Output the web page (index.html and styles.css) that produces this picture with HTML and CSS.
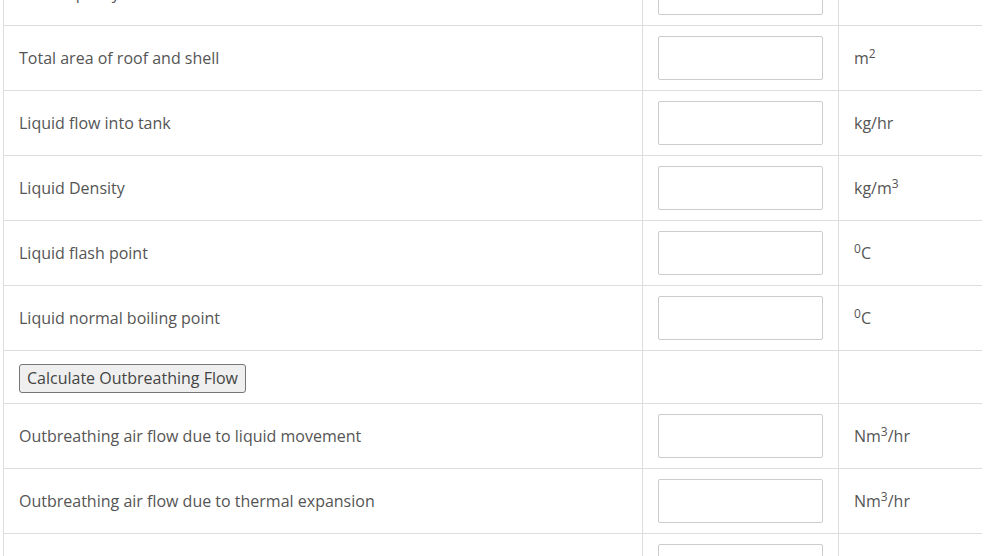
FILE: index.html
```html
<!DOCTYPE html>
<html lang="en">
<head>
    <meta charset="UTF-8">
    <title>Outbreathing Flow</title>
    <link rel="stylesheet" href="styles.css">
</head>
<body>
<div class="page">
    <table class="calc">
        <tr>
            <td class="label">Tank capacity</td>
            <td class="field"><input type="text" /></td>
            <td class="unit">m<sup>3</sup></td>
        </tr>
        <tr>
            <td class="label">Total area of roof and shell</td>
            <td class="field"><input type="text" /></td>
            <td class="unit">m<sup>2</sup></td>
        </tr>
        <tr>
            <td class="label">Liquid flow into tank</td>
            <td class="field"><input type="text" /></td>
            <td class="unit">kg/hr</td>
        </tr>
        <tr>
            <td class="label">Liquid Density</td>
            <td class="field"><input type="text" /></td>
            <td class="unit">kg/m<sup>3</sup></td>
        </tr>
        <tr>
            <td class="label">Liquid flash point</td>
            <td class="field"><input type="text" /></td>
            <td class="unit"><sup>0</sup>C</td>
        </tr>
        <tr>
            <td class="label">Liquid normal boiling point</td>
            <td class="field"><input type="text" /></td>
            <td class="unit"><sup>0</sup>C</td>
        </tr>
        <tr class="action">
            <td class="label"><button>Calculate Outbreathing Flow</button></td>
            <td class="field"></td>
            <td class="unit"></td>
        </tr>
        <tr>
            <td class="label">Outbreathing air flow due to liquid movement</td>
            <td class="field"><input type="text" /></td>
            <td class="unit">Nm<sup>3</sup>/hr</td>
        </tr>
        <tr>
            <td class="label">Outbreathing air flow due to thermal expansion</td>
            <td class="field"><input type="text" /></td>
            <td class="unit">Nm<sup>3</sup>/hr</td>
        </tr>
        <tr>
            <td class="label">Total outbreathing air flow</td>
            <td class="field"><input type="text" /></td>
            <td class="unit">Nm<sup>3</sup>/hr</td>
        </tr>
    </table>
</div>
</body>
</html>
```

FILE: styles.css
```css
body, html {
    margin: 0;
    font-family: "Open Sans", "Liberation Sans", sans-serif;
    color: #555;
    background: #fff;
    overflow: hidden;
}
.page {
    padding-left: 3px;
    margin-top: -40px;
}
.calc {
    border-collapse: collapse;
    width: 979px;
    border-left: 1px solid #ddd;
    font-size: 16px;
}
.calc td {
    border-top: 1px solid #ddd;
    border-bottom: 1px solid #ddd;
    padding: 10px 15px;
    height: 44px;
    vertical-align: middle;
    line-height: 22px;
}
.calc .label {
    width: 608px;
    border-right: 1px solid #ddd;
}
.calc .field {
    width: 165px;
    border-right: 1px solid #ddd;
}
.calc .unit {
    padding-left: 15px;
}
.calc .action td {
    height: 32px;
}
input {
    display: block;
    box-sizing: border-box;
    width: 165px;
    height: 44px;
    border: 1px solid #ccc;
    border-radius: 2px;
    background: #fff;
    margin: 0;
}
sup {
    font-size: 12px;
    line-height: 0;
    vertical-align: 6px;
}
button {
    font-family: "Open Sans", "Liberation Sans", sans-serif;
    font-size: 16px;
    color: #444;
    background: #efefef;
    border: 1px solid #767676;
    border-radius: 3px;
    padding: 3px 7px;
    line-height: 21px;
    margin-top: 2px;
}
```
